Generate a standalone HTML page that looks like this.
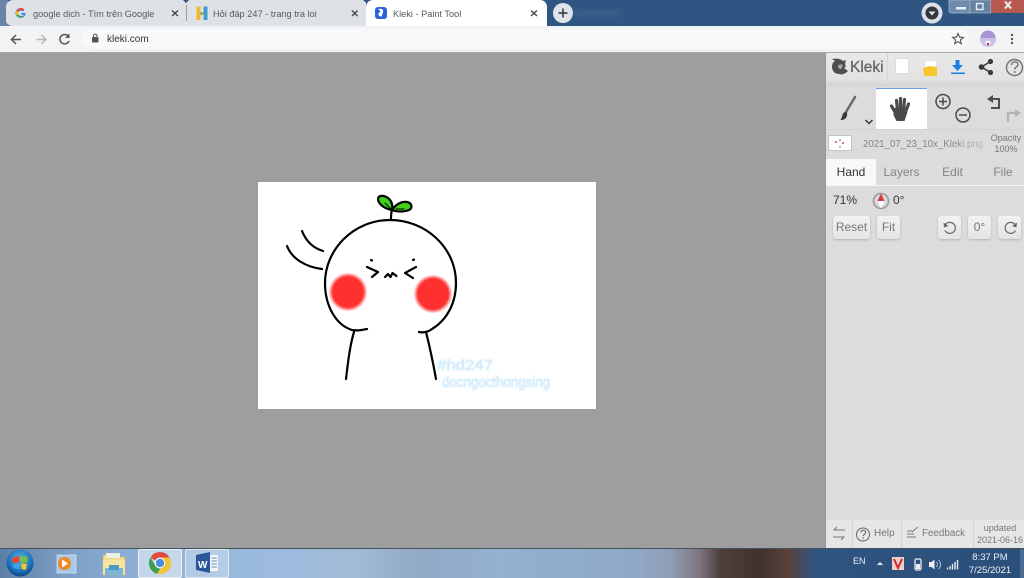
<!DOCTYPE html>
<html lang="en"><head><meta charset="utf-8"><title>Kleki - Paint Tool</title>
<style>
html,body{margin:0;padding:0}
body{width:1024px;height:578px;overflow:hidden;position:relative;background:#9e9e9e;font-family:"Liberation Sans","Noto Sans CJK SC",sans-serif}
.a{position:absolute;white-space:nowrap}
svg{position:absolute;overflow:visible}
.btn{position:absolute;top:216px;height:23px;background:linear-gradient(#f2f2f2,#e4e4e4);border-radius:3px;box-shadow:0 1px 2px rgba(0,0,0,.18);color:#777;font-size:12px;line-height:23px;text-align:center}
</style></head><body>

<div class="a" style="left:0;top:0;width:1024px;height:26px;background:#2f5583"></div>
<div class="a" style="left:0;top:0;width:8px;height:26px;background:#6b83a5"></div>
<div class="a" style="left:6px;top:0;width:180px;height:26px;background:#dee1e6;border-radius:7px 0 0 6px"></div>
<div class="a" style="left:186px;top:0;width:180px;height:26px;background:#dee1e6"></div>
<div class="a" style="left:186px;top:5px;width:1px;height:16px;background:#9aa0a6"></div>
<div class="a" style="left:366px;top:0;width:181px;height:27px;background:#fff;border-radius:7px 7px 0 0"></div>
<div class="a" style="left:33px;top:7px;font-size:9.2px;line-height:14px;color:#5a5a5a">google dịch - Tìm trên Google</div>
<div class="a" style="left:213px;top:7px;font-size:9.2px;line-height:14px;color:#5a5a5a">Hỏi đáp 247 - trang tra loi</div>
<div class="a" style="left:393px;top:7px;font-size:9.2px;line-height:14px;color:#5a5a5a">Kleki - Paint Tool</div>
<svg style="left:0;top:0" width="1024" height="30" viewBox="0 0 1024 30">
  <path d="M183 0h6l-3 3zM363 0h7l-3.500 3z" fill="#2f5583"/>
  <path d="M25.500 13H21v1.800h2.600c-.3 1.300-1.300 2-2.600 2a3 3 0 0 1 0-6c.7 0 1.400.3 1.900.7l1.300-1.300A4.800 4.800 0 1 0 21 17.800c2.500 0 4.600-1.800 4.600-4.800z" fill="#4285f4"/>
  <path d="M16.800 10.500l1.600 1.100A3 3 0 0 1 21 9.900c.7 0 1.400.3 1.900.7l1.300-1.300A4.800 4.800 0 0 0 16.800 10.500z" fill="#ea4335"/>
  <path d="M16.800 15.500l1.600-1.200a3 3 0 0 1 0-2.600l-1.600-1.200a4.800 4.800 0 0 0 0 5z" fill="#fbbc05"/>
  <path d="M16.800 15.500a4.800 4.800 0 0 0 6.600 1.500l-1.500-1.200a3 3 0 0 1-3.500-1.500z" fill="#34a853"/>
  <path d="M172 10.500l6 5.500M178 10.500l-6 5.500M352 10.500l5.500 5.500M357.500 10.500l-5.500 5.500M531 10.500l6 5.500M537 10.500l-6 5.500" stroke="#444" stroke-width="1.300" fill="none"/>
  <rect x="196.500" y="6.500" width="4" height="13.500" fill="#f2b632"/><rect x="203.500" y="6.500" width="4" height="13.500" fill="#3f9bd1"/><rect x="200" y="12" width="4" height="3" fill="#8fb35a"/>
  <rect x="375" y="7" width="12" height="12" rx="3" fill="#2962d9"/><path d="M378 9.500c3-2 6 0 5 3-.5 1.500-1.500 2-1 4-2.500 0-4-1-3.500-3 .3-1.300 2-1 2-2.200 0-.8-1.500-1-2.500-1.800z" fill="#fff"/>
  <circle cx="563" cy="13" r="10" fill="#dfe3ea"/><path d="M563 8.500v9M558.500 13h9" stroke="#333" stroke-width="1.500"/>
  <circle cx="932" cy="13" r="10.500" fill="#dce0e5"/><circle cx="932" cy="13" r="6.500" fill="#33373d"/><path d="M928.500 11.500h7l-3.500 4z" fill="#e5e5e5"/>
  <path d="M949 0h21v13h-19a2 2 0 0 1-2-2z" fill="#6e8bab" stroke="#a9bbcd" stroke-width=".7"/>
  <rect x="970" y="0" width="20.500" height="13" fill="#64829f" stroke="#a9bbcd" stroke-width=".7"/>
  <path d="M991 0h33v13h-33z" fill="#b85a50"/>
  <rect x="956" y="7" width="10" height="2.500" fill="#e8eef4"/>
  <path d="M976.500 3.500h6.500v6h-6.500z" fill="none" stroke="#e8eef4" stroke-width="1.400"/>
  <path d="M1005 1.500l6 7M1011 1.500l-6 7" stroke="#f0f0f0" stroke-width="2"/>
</svg>
<div class="a" style="left:575px;top:9px;width:45px;height:8px;background:#42648f;opacity:.55;filter:blur(2px)"></div>

<div class="a" style="left:0;top:26px;width:1024px;height:26px;background:#f1f3f4"></div>
<div class="a" style="left:0;top:52px;width:1024px;height:1px;background:#a8a8a8"></div>
<div class="a" style="left:81px;top:29px;width:888px;height:20px;border-radius:10px;background:#f8f9fa"></div>
<div class="a" style="left:107px;top:33px;font-size:10px;line-height:14px;color:#333">kleki.com</div>
<svg style="left:0;top:26px" width="1024" height="26" viewBox="0 0 1024 26">
  <path d="M21 13.500H12M16 9l-4.500 4.500L16 18" fill="none" stroke="#555" stroke-width="1.500"/>
  <path d="M46 13.500H36.500M41.500 9l4.500 4.500L41.500 18" fill="none" stroke="#b5b7b9" stroke-width="1.500"/>
  <path d="M68.500 10.500A4.700 4.700 0 1 0 69 15" fill="none" stroke="#555" stroke-width="1.500"/><path d="M69.500 7.500v4.500h-4.500z" fill="#555"/>
  <rect x="92" y="11" width="6.500" height="5.500" rx="1" fill="#555"/><path d="M93.500 11V9.500a1.800 1.800 0 0 1 3.500 0V11" fill="none" stroke="#555"/>
  <path d="M958 7.500l1.500 3.600 3.900.3-3 2.500.9 3.800-3.300-2-3.300 2 .9-3.800-3-2.500 3.900-.3z" fill="none" stroke="#555" stroke-width="1.100"/>
  <circle cx="988" cy="13" r="8" fill="#c8c1e6"/><path d="M980.500 12a7.500 7.500 0 0 1 15 0z" fill="#a694d4"/><circle cx="988" cy="17" r="2.500" fill="#fff"/><circle cx="988" cy="18" r="1.300" fill="#b3304a"/>
  <circle cx="1012" cy="9" r="1.200" fill="#555"/><circle cx="1012" cy="13" r="1.200" fill="#555"/><circle cx="1012" cy="17" r="1.200" fill="#555"/>
</svg>

<div class="a" style="left:258px;top:181.500px;width:337.500px;height:227px;background:#fff"></div>
<svg style="left:0;top:0" width="1024" height="578" viewBox="0 0 1024 578">
  <defs>
    <radialGradient id="c"><stop offset="0" stop-color="#ff3030"/><stop offset=".78" stop-color="#ff3030"/><stop offset="1" stop-color="#ff3030" stop-opacity="0"/></radialGradient>
    <filter id="bl" x="-30%" y="-30%" width="160%" height="160%"><feGaussianBlur stdDeviation=".35"/></filter>
    <filter id="bl2" x="-10%" y="-30%" width="120%" height="160%"><feGaussianBlur stdDeviation=".7"/></filter>
  </defs>
  <circle cx="348" cy="292" r="19.500" fill="url(#c)"/>
  <circle cx="433" cy="294" r="19.500" fill="url(#c)"/>
  <path d="M385 264.500h12" stroke="#ff4040" stroke-width="3.500" stroke-linecap="round" filter="url(#bl)"/>
  <g fill="none" stroke="#000" stroke-width="2.200" stroke-linecap="round" stroke-linejoin="round" filter="url(#bl)">
    <path d="M302 231C306 241 313 248 323 251"/>
    <path d="M287 246C292 259 306 267 322 269"/>
    <path d="M419 332C424 333 428 332 432 329C447 320 456 303 456 283C456 247 425 220 390 220C353 220 325 250 325 283C325 306 336 325 352 330C358 331 362 330 367 329"/>
    <path d="M354 332C350 345 348 362 346 379"/>
    <path d="M426 332C430 348 433 362 436 379"/>
    <path d="M391 219C391 216 391 213 392 210"/>
    <path d="M367 267L378 272L372 277"/>
    <path d="M416 267L405 273L413 278"/>
    <path d="M371 260l1 .5M413 260l1-.5"/>
    <path d="M385 277l3-3 2.500 3 2-4 4 3"/>
    <path d="M392 210C385 209 378 204 378 199C378 195 384 195 388 198C392 201 393 206 392 210Z" fill="#3fd01f"/>
    <path d="M392 210C396 204 402 201 407 202C412 203 413 208 409 210C404 212 397 212 392 210Z" fill="#3fd01f"/>
    <path d="M385 203l7 7M396 209h8" stroke-width="1"/>
  </g>
  <g font-family="Liberation Sans,sans-serif" fill="#cbe9fc" stroke="#cbe9fc" stroke-width=".6" filter="url(#bl2)">
    <text x="437" y="370" font-size="15" textLength="56" lengthAdjust="spacingAndGlyphs">#hd247</text>
    <text x="442" y="387" font-size="15" textLength="108" lengthAdjust="spacingAndGlyphs">docngocthongsing</text>
  </g>
</svg>

<div class="a" style="left:825px;top:53px;width:199px;height:495px;background:#dcdcdc;border-left:1px solid #979797;box-sizing:border-box"></div>
<div class="a" style="left:826px;top:53px;width:198px;height:33px;background:linear-gradient(#e9e9e9,#e2e2e2 80%,#d2d2d2);box-sizing:border-box"></div>
<div class="a" style="left:887px;top:53px;width:1px;height:30px;background:#d6d6d6"></div>
<div class="a" style="left:850px;top:58px;font-size:15.500px;line-height:20px;color:#666;-webkit-text-stroke:.3px #666">Kleki</div>
<div class="a" style="left:896px;top:59px;width:12px;height:14px;background:#fff;box-shadow:0 0 1px #bbb"></div>
<div class="a" style="left:876px;top:88px;width:51px;height:41px;background:#fff;border-top:1px solid #6d9eea;box-sizing:border-box"></div>
<svg style="left:0;top:0" width="1024" height="578" viewBox="0 0 1024 578">
  <path d="M832 59c5-1 9 0 11 2l3-1-1 4c1 2 1 3-1 4l4 3c-3 3-6 4-9 3-4 0-7-3-7-7 0-3 1-5 3-6z" fill="#4e4e4e"/>
  <path d="M838 66c1-2 3-2 5-1-1 2-1 3-2 4-2 0-3-1-3-3z" fill="#a6a6a6"/>
  <path d="M925 67v-6h11v6z" fill="#fff" stroke="#dedede" stroke-width=".5"/>
  <path d="M923 68l6-2 8 1v9h-13z" fill="#f7c52c"/>
  <path d="M955.500 60h4v5h3.500l-5.500 6-5.500-6h3.500z" fill="#1a7fe0"/><rect x="951" y="72.500" width="14" height="1.500" fill="#1a7fe0"/>
  <g fill="#3a3a3a"><circle cx="981.500" cy="67" r="2.800"/><circle cx="990.500" cy="61.500" r="2.600"/><circle cx="990.500" cy="72.500" r="2.600"/></g>
  <path d="M981.500 67l9-5.500M981.500 67l9 5.500" stroke="#3a3a3a" stroke-width="1.500"/>
  <circle cx="1014.500" cy="67.500" r="8" fill="none" stroke="#707070" stroke-width="1.400"/>
  <path d="M1011.500 65c0-4 6.500-4 6.500-.5 0 2.500-3.300 2.500-3.300 5" fill="none" stroke="#777" stroke-width="1.500"/><circle cx="1014.700" cy="72" r="1" fill="#777"/>

  <path d="M855 97L846 112" stroke="#6a6a6a" stroke-width="2.500" stroke-linecap="round"/>
  <path d="M846 112c-2 0-3 1-3.500 3s-1 3-2 5c3 0 5-1 6-3 1-2 1-4-.5-5z" fill="#3a3a3a"/>
  <path d="M865.500 120l3.500 3.500 3.500-3.500" fill="none" stroke="#333" stroke-width="1.400"/>
  <g stroke="#4a4a4a" stroke-width="3.200" stroke-linecap="round" fill="none">
    <path d="M891.500 106L895.500 113M896.500 100.500L897.500 110M900.500 98.500V110M904.500 99.500L903.500 110M908.500 104L905.500 112"/>
  </g>
  <path d="M894 108h12l1.500 4-3 9h-8l-3-6z" fill="#4a4a4a"/>
  <g fill="none" stroke="#4a4a4a" stroke-width="1.500">
    <circle cx="943" cy="101.500" r="7"/><path d="M939 101.500h8M943 97.500v8"/>
    <circle cx="963" cy="115" r="7"/><path d="M959 115h8"/>
  </g>
  <path d="M987 99l6-4v8z" fill="#4e4e4e"/><path d="M991 99h8v9h-8" fill="none" stroke="#4e4e4e" stroke-width="2"/>
  <path d="M1008 122v-9h8" fill="none" stroke="#b4b4b4" stroke-width="2.200"/><path d="M1015 109l6 4-6 4z" fill="#b4b4b4"/>
</svg>

<div class="a" style="left:826px;top:129px;width:198px;height:1px;background:#d2d2d2"></div>
<div class="a" style="left:828px;top:135px;width:24px;height:16px;background:#fff;border:1px solid #c4c4c4;box-sizing:border-box"></div>
<svg style="left:0;top:0" width="1024" height="578" viewBox="0 0 1024 578"><g fill="#e2484f"><circle cx="836" cy="142" r="1"/><circle cx="840" cy="140" r=".8" fill="#555"/><circle cx="843" cy="143" r="1"/><circle cx="840" cy="147" r=".7" fill="#555"/></g></svg>
<div class="a" style="left:863px;top:138px;width:122px;font-size:9.700px;line-height:14px;color:#858585;overflow:hidden;-webkit-mask-image:linear-gradient(90deg,#000 70%,rgba(0,0,0,.35) 100%);mask-image:linear-gradient(90deg,#000 70%,rgba(0,0,0,.35) 100%)">2021_07_23_10x_Kleki.png</div>
<div class="a" style="left:988px;top:133px;width:36px;font-size:9px;line-height:10.500px;color:#777;text-align:center;white-space:normal">Opacity<br>100%</div>

<div class="a" style="left:826px;top:159px;width:50px;height:26px;background:#f8f8f8"></div>
<div class="a" style="left:826px;top:185px;width:198px;height:1px;background:#f5f5f5"></div>
<div class="a" style="left:826px;top:159px;width:50px;font-size:12px;line-height:26px;color:#333;text-align:center">Hand</div>
<div class="a" style="left:876px;top:159px;width:51px;font-size:12px;line-height:26px;color:#858585;text-align:center">Layers</div>
<div class="a" style="left:927px;top:159px;width:51px;font-size:12px;line-height:26px;color:#858585;text-align:center">Edit</div>
<div class="a" style="left:978px;top:159px;width:50px;font-size:12px;line-height:26px;color:#858585;text-align:center">File</div>

<div class="a" style="left:833px;top:192px;font-size:12px;line-height:16px;color:#333">71%</div>
<div class="a" style="left:893px;top:192px;font-size:12px;line-height:16px;color:#333">0°</div>
<svg style="left:0;top:0" width="1024" height="578" viewBox="0 0 1024 578">
  <circle cx="881" cy="201" r="7.500" fill="#d8d8d8" stroke="#999" stroke-width="1.500"/>
  <path d="M881 193.500l3.500 7.500h-7z" fill="#d43a3a"/><path d="M881 208.500l3.500-7.500h-7z" fill="#fff"/>
</svg>
<div class="btn" style="left:833px;width:37px">Reset</div>
<div class="btn" style="left:877px;width:23px">Fit</div>
<div class="btn" style="left:938px;width:23px"></div>
<div class="btn" style="left:968px;width:23px">0°</div>
<div class="btn" style="left:998px;width:23px"></div>
<svg style="left:0;top:0" width="1024" height="578" viewBox="0 0 1024 578">
  <path d="M945.500 224.500a5.500 5.500 0 1 1-.5 6" fill="none" stroke="#666" stroke-width="1.200"/><path d="M943.500 222.500l.5 5 4.500-1.500z" fill="#666"/>
  <path d="M1015 224.500a5.500 5.500 0 1 0 .5 6" fill="none" stroke="#666" stroke-width="1.200"/><path d="M1017 222.500l-.5 5-4.500-1.500z" fill="#666"/>
</svg>

<div class="a" style="left:826px;top:520px;width:198px;height:28px;background:#e6e6e6"></div>
<div class="a" style="left:852px;top:520px;width:1px;height:28px;background:#d2d2d2"></div>
<div class="a" style="left:901px;top:520px;width:1px;height:28px;background:#d2d2d2"></div>
<div class="a" style="left:973px;top:520px;width:1px;height:28px;background:#d2d2d2"></div>
<div class="a" style="left:874px;top:527px;font-size:10px;line-height:14px;color:#777">Help</div>
<div class="a" style="left:922px;top:527px;font-size:9.800px;line-height:14px;color:#777">Feedback</div>
<div class="a" style="left:972px;top:522px;width:56px;font-size:9px;line-height:12px;color:#777;text-align:center;white-space:normal">updated<br>2021-06-16</div>
<svg style="left:0;top:0" width="1024" height="578" viewBox="0 0 1024 578">
  <path d="M845 530h-11l3-3M833 537h11l-3 3" fill="none" stroke="#777" stroke-width="1"/>
  <circle cx="863" cy="534.500" r="6.500" fill="none" stroke="#666" stroke-width="1"/>
  <path d="M860.800 532.500c0-3 4.800-3 4.800 0 0 1.800-2.300 1.800-2.300 3.500" fill="none" stroke="#666"/><circle cx="863.300" cy="538" r=".7" fill="#666"/>
  <path d="M907 531h5M907 534h7M907 537h9M912 532l6-5" fill="none" stroke="#777"/>
</svg>

<div class="a" style="left:0;top:548px;width:1024px;height:30px;background:linear-gradient(90deg,#5c7fa8 0,#7a9cc2 60px,#8dafd5 130px,#9dbcdf 280px,#a3bcd6 350px,#92a9c6 420px,#94b1d2 500px,#8ea8c6 640px,#8f9db5 670px,#7d7580 700px,#4f3f3c 720px,#42322e 760px,#5a423c 790px,#3c4f6e 806px,#2f5480 822px,#2b4f7b 1024px)"></div>
<div class="a" style="left:0;top:548px;width:1024px;height:1px;background:#46515e"></div>
<div class="a" style="left:1020px;top:549px;width:4px;height:29px;background:#4a6a90"></div>
<div class="a" style="left:138px;top:549px;width:44px;height:29px;background:rgba(240,245,250,.55);border:1px solid rgba(255,255,255,.6);border-radius:2px;box-sizing:border-box"></div>
<div class="a" style="left:185px;top:549px;width:44px;height:29px;background:rgba(225,235,245,.4);border:1px solid rgba(255,255,255,.55);border-radius:2px;box-sizing:border-box"></div>
<svg style="left:0;top:0" width="1024" height="578" viewBox="0 0 1024 578">
  <defs><radialGradient id="or" cx=".5" cy=".35" r=".7"><stop offset="0" stop-color="#5bb7e8"/><stop offset=".7" stop-color="#1769b4"/><stop offset="1" stop-color="#123a68"/></radialGradient></defs>
  <circle cx="20" cy="563" r="13.500" fill="url(#or)"/>
  <path d="M12 558l7-2 .5 6.500-7 .5z" fill="#e64a2e"/><path d="M20.500 556l7 1-.5 6-6-.5z" fill="#7bbf3a"/>
  <path d="M12.500 564l7-.5.500 6-7-1.500z" fill="#3ba2e5"/><path d="M21 563.500l6 .5-1 6-4.500-1z" fill="#f6c42d"/>

  <rect x="57" y="555" width="19" height="18" fill="#a8c9e6" stroke="#d8e8f5" stroke-width=".7"/>
  <circle cx="64.500" cy="563.500" r="6.500" fill="#ee8a24"/><path d="M62 559.500l6 4-6 4z" fill="#fff"/>

  <path d="M103 555h9l2 2h11v18h-22z" fill="#f3dc8c" stroke="#c9b067" stroke-width=".6"/>
  <rect x="106" y="553" width="14" height="5" fill="#eef0e4"/>
  <path d="M103 560h22v15h-22z" fill="#f6e4a1"/>
  <path d="M105 568h18v7h-18z" fill="#7cb6d9"/><rect x="109" y="565" width="10" height="5" fill="#4c9ac8"/>

  <path d="M160 552a11 11 0 0 1 9.500 5.500H160a5.500 5.500 0 0 0-5 3l-4.500-3A11 11 0 0 1 160 552z" fill="#dd4b3e"/>
  <path d="M150.500 557.500l4.700 8a5.500 5.500 0 0 0 5.500 3l-3.500 5.300A11 11 0 0 1 150.500 557.500z" fill="#3ca04e"/>
  <path d="M169.500 557.500a11 11 0 0 1-12.300 16.300l4.700-8a5.500 5.500 0 0 0 .3-6 5.500 5.500 0 0 0-2.200-2.300z" fill="#f5c33b"/>
  <circle cx="160" cy="563" r="5.200" fill="#fff"/><circle cx="160" cy="563" r="4.200" fill="#4a8cdf"/>

  <path d="M196 555l14-3v21l-14-3z" fill="#2a5699"/>
  <rect x="210" y="555" width="8" height="16" fill="#f3f5f8"/>
  <path d="M211.500 558h5.500M211.500 561h5.500M211.500 564h5.500M211.500 567h5.500" stroke="#6a8fc4"/>
  <text x="198" y="568" font-size="10" font-weight="700" fill="#fff" font-family="Liberation Sans,sans-serif">W</text>

  <path d="M877 565l3-3 3 3z" fill="#eee"/>
  <rect x="892" y="557" width="12" height="13" fill="#eccfc8"/><path d="M894 559l4 9 4-9" fill="none" stroke="#cc2c2c" stroke-width="2"/>
  <rect x="915" y="559" width="6" height="11" rx="1.500" fill="none" stroke="#eee" stroke-width="1.300"/><rect x="916" y="564" width="4" height="5" fill="#eee"/>
  <path d="M929 562h2.500l3-2.500v10l-3-2.500h-2.500z" fill="#eee"/><path d="M936.500 562a4 4 0 0 1 0 5M938.500 560a6 6 0 0 1 0 9" fill="none" stroke="#dde" stroke-width=".8"/>
  <path d="M947.500 567.500v2M950 566v3.500M952.500 564v5.500M955 562v7.500M957.500 560v9.500" stroke="#e4e9ef" stroke-width="1.400"/>
</svg>
<div class="a" style="left:853px;top:555px;font-size:9px;line-height:12px;color:#e8eef5">EN</div>
<div class="a" style="left:966px;top:551px;width:48px;font-size:9.500px;line-height:13px;color:#eef2f7;text-align:center;white-space:normal">8:37 PM<br>7/25/2021</div>
</body></html>
